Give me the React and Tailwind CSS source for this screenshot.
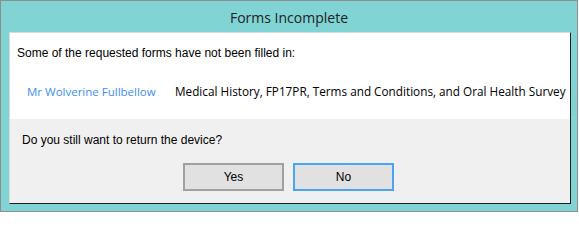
export default function App() {
  return (
    <div className="w-[579px] h-[214px] bg-white" style={{ fontFamily: '"Open Sans", "Noto Sans", sans-serif' }}>
      <div className="w-[578px] h-[212px] border border-[#8e8e8e] bg-[#80d4d4] flex flex-col">
        <div className="h-[31px] flex items-center justify-center text-[14px] text-[#222] pt-[1px]">
          Forms Incomplete
        </div>
        <div className="ml-[8px] mr-[6px] mb-[7px] flex-1 flex flex-col border border-t-[#d9d9d9] border-l-[#d9d9d9] border-r-[#1e1e1e] border-b-[#1e1e1e]">
          <div className="h-[86px] bg-white text-black">
            <div className="pl-[7px] pt-[11px] h-[40px] text-[12px] font-['Liberation_Sans',Arial,sans-serif]">
              Some of the requested forms have not been filled in:
            </div>
            <div className="flex items-center pt-[10px] pl-[17px]">
              <span className="text-[#3d8ef0] w-[148px] text-[11.5px]">Mr Wolverine Fullbellow</span>
              <span className="text-[11.75px]">Medical History, FP17PR, Terms and Conditions, and Oral Health Survey</span>
            </div>
          </div>
          <div className="flex-1 bg-[#f0f0f0] text-[12px] text-black font-['Liberation_Sans',Arial,sans-serif]">
            <div className="pl-[12px] pt-[12px]">Do you still want to return the device?</div>
            <div className="flex gap-[9px] pl-[173px] pt-[14px]">
              <button className="w-[101px] h-[28px] border-2 border-[#a0a0a0] bg-[#e1e1e1] text-[12px]">Yes</button>
              <button className="w-[101px] h-[28px] border-2 border-[#4aa3f5] bg-[#e1e1e1] text-[12px]">No</button>
            </div>
          </div>
        </div>
      </div>
    </div>
  );
}
